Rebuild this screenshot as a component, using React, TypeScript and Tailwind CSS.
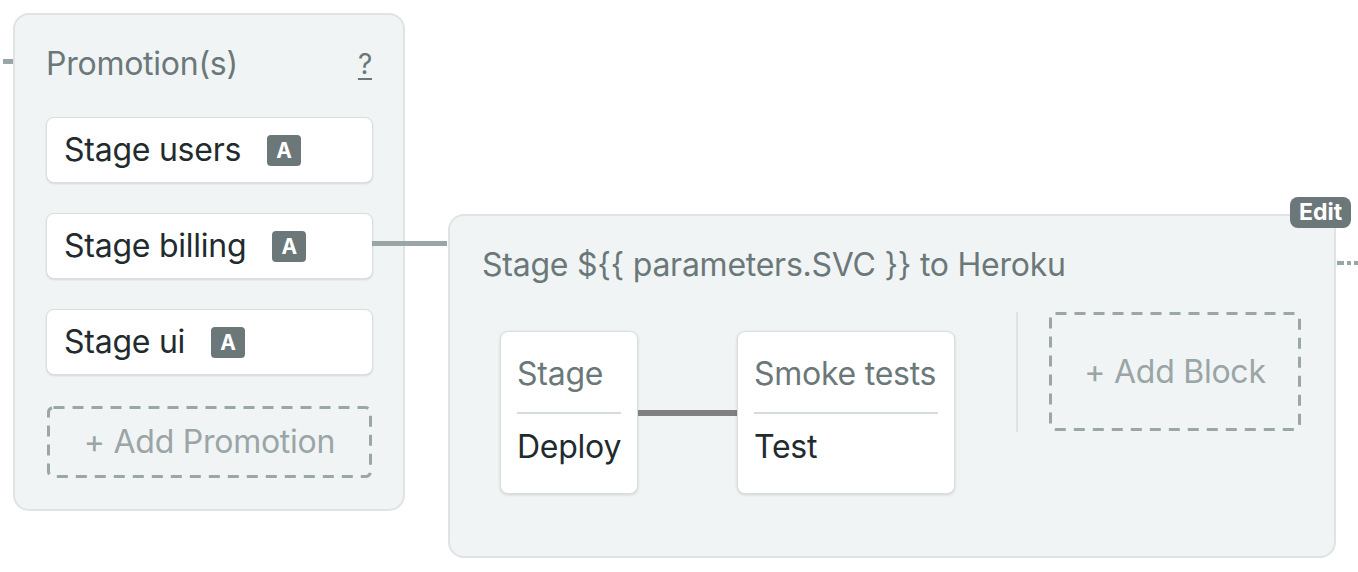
import React from "react";

interface Promotion {
  name: string;
  connected?: boolean;
}

interface Block {
  name: string;
  job: string;
  width: string;
}

const promotions: Promotion[] = [
  { name: "Stage users" },
  { name: "Stage billing", connected: true },
  { name: "Stage ui" },
];

const blocks: Block[] = [
  { name: "Stage", job: "Deploy", width: "w-[138px]" },
  { name: "Smoke tests", job: "Test", width: "w-[218px]" },
];

function AutoBadge() {
  return (
    <span className="flex h-[31px] w-[34px] items-center justify-center rounded-[4px] bg-[#6b7779] text-[21px] font-bold leading-none tracking-normal text-white">
      A
    </span>
  );
}

// dashed outline drawn with svg so the dash length matches the design
function DashedBox({
  className,
  children,
}: {
  className: string;
  children: React.ReactNode;
}) {
  return (
    <div className={`relative flex items-center justify-center ${className}`}>
      <svg className="absolute inset-0 h-full w-full overflow-visible">
        <rect
          x="1.5"
          y="1.5"
          width="calc(100% - 3px)"
          height="calc(100% - 3px)"
          rx="5"
          fill="none"
          stroke="#9ba6a6"
          strokeWidth="3"
          strokeDasharray="11 8"
        />
      </svg>
      <span className="text-[32px] leading-[40px] text-[#9aa5a6]">
        {children}
      </span>
    </div>
  );
}

function PromotionCard({ promotion }: { promotion: Promotion }) {
  return (
    <div className="relative flex h-[66px] items-center gap-[26px] rounded-[8px] border border-[#d9dedf] bg-white pl-[17px] shadow-[0_1px_2px_rgba(0,0,0,0.12)]">
      <span className="text-[32px] leading-[40px] text-[#1f2b2e]">
        {promotion.name}
      </span>
      <AutoBadge />
      {promotion.connected && (
        <div className="absolute left-full top-[27px] h-[5px] w-[75px] bg-[#9aa6a6]" />
      )}
    </div>
  );
}

function BlockCard({ block }: { block: Block }) {
  return (
    <div
      className={`${block.width} h-[163px] rounded-[8px] border border-[#d9dedf] bg-white px-[16px] pt-[22px] shadow-[0_1px_3px_rgba(0,0,0,0.14)]`}
    >
      <div className="whitespace-nowrap text-[32px] leading-[40px] text-[#6b7879]">
        {block.name}
      </div>
      <div className="mt-[18px] h-[2px] bg-[#d5dadb]" />
      <div className="mt-[13px] text-[32px] leading-[40px] text-[#1f2b2e]">
        {block.job}
      </div>
    </div>
  );
}

function App() {
  return (
    <div className="h-[572px] w-[1358px] overflow-hidden bg-white font-['Inter',sans-serif] tracking-[-0.25px]">
      <div className="flex items-start pt-[13px]">
        <div className="ml-[3px] mt-[46px] h-[5px] w-[10px] bg-[#9aa6a6]" />

        <div className="h-[498px] w-[392px] rounded-[16px] border-2 border-[#dfe3e4] bg-[#f1f4f5] pl-[31px] pr-[30px] pt-[29px]">
          <div className="mb-[33px] flex h-[40px] items-center justify-between">
            <span className="text-[32px] leading-[40px] text-[#6b7879]">
              Promotion(s)
            </span>
            <span className="mr-px text-[28px] leading-[34px] text-[#6b7879] underline decoration-2 underline-offset-[4px]">
              ?
            </span>
          </div>
          <div className="flex flex-col gap-[30px]">
            {promotions.map((p) => (
              <PromotionCard key={p.name} promotion={p} />
            ))}
            <DashedBox className="mx-px mt-px h-[72px]">+ Add Promotion</DashedBox>
          </div>
        </div>

        <div className="mt-[201px] flex items-start">
          <div className="w-[43px]" />
          <div className="relative h-[344px] w-[888px] rounded-[16px] border-2 border-[#dfe3e4] bg-[#f1f4f5] pl-[32px] pr-[32px] pt-[29px]">
            <div className="absolute -right-[17px] -top-[19px] flex h-[31px] w-[61px] items-center justify-center rounded-[8px] bg-[#6b7779] text-[23px] font-bold leading-none tracking-normal text-white">
              Edit
            </div>
            <div className="absolute -right-[24px] top-[45px] flex gap-[3px]">
              <div className="h-[4px] w-[7px] bg-[#9aa6a6]" />
              <div className="h-[4px] w-[4px] bg-[#9aa6a6]" />
              <div className="h-[4px] w-[4px] bg-[#9aa6a6]" />
            </div>

            <div className="text-[32px] leading-[40px] text-[#6b7879]">
              {"Stage ${{ parameters.SVC }} to Heroku"}
            </div>

            <div className="mt-[27px] flex items-start">
              <div className="flex items-start pl-[18px] pt-[19px]">
                <BlockCard block={blocks[0]} />
                <div className="mt-[79px] h-[6px] w-[99px] bg-[#808080]" />
                <BlockCard block={blocks[1]} />
              </div>
              <div className="ml-[61px] h-[120px] w-[2px] bg-[#dfe3e4]" />
              <DashedBox className="ml-[31px] h-[119px] w-[252px]">+ Add Block</DashedBox>
            </div>
          </div>
        </div>
      </div>
    </div>
  );
}

export default App;
